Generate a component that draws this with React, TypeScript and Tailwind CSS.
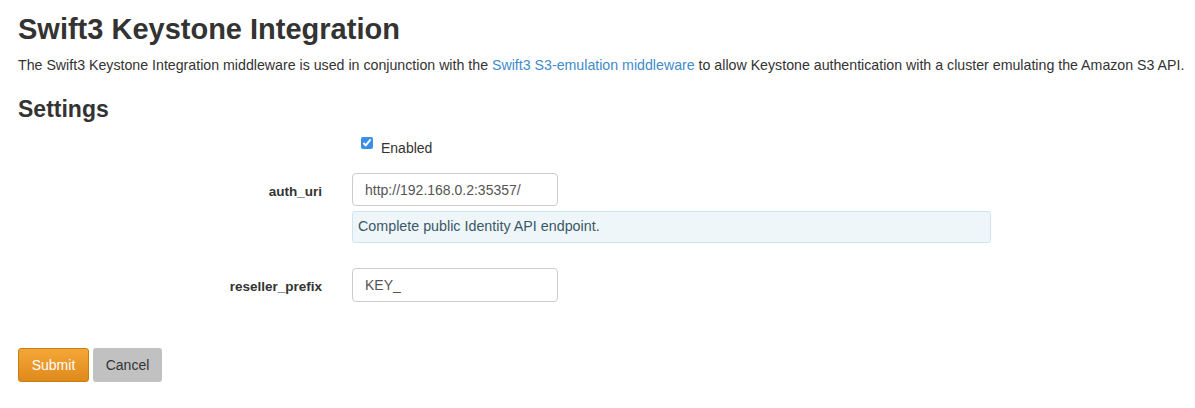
import React from "react";

function Field({ label, children }: { label: string; children: React.ReactNode }) {
    return (
        <div className="flex items-start">
            <label className="w-[304px] shrink-0 text-right font-bold pt-[9px] text-[13.5px]">{label}</label>
            <div className="ml-[30px] flex-1">{children}</div>
        </div>
    );
}

export default function App() {
    return (
        <div className="px-[18px] pt-[8px] text-[14px] text-[#333] font-['Liberation_Sans',Arial,sans-serif] bg-white min-h-screen">
            <h1 className="text-[29px] font-bold leading-[42px]">Swift3 Keystone Integration</h1>
            <p className="mt-[6px] leading-[18px] text-[14.2px] whitespace-nowrap">
                The Swift3 Keystone Integration middleware is used in conjunction with the{" "}
                <a href="#" className="text-[#428bca]">Swift3 S3-emulation middleware</a> to allow Keystone
                authentication with a cluster emulating the Amazon S3 API.
            </p>
            <h2 className="mt-[20px] text-[23px] font-bold leading-[30px]">Settings</h2>

            <form className="mt-[12px] flex flex-col">
                <div className="flex items-start ml-[343px] h-[18px]">
                    <input type="checkbox" defaultChecked className="w-[12px] h-[12px] accent-[#3b8ee8] m-0 mt-[1px]" />
                    <span className="ml-[8px] mt-[2px]">Enabled</span>
                </div>

                <div className="mt-[19px]">
                    <Field label="auth_uri">
                        <input
                            type="text"
                            defaultValue="http://192.168.0.2:35357/"
                            className="w-[206px] h-[33px] px-[12px] border border-[#ccc] rounded-[4px] text-[14px] text-[#555] outline-none"
                        />
                        <div className="mt-[5px] w-[639px] h-[32px] px-[5px] flex items-center bg-[#eef6f9] border border-[#cfe6ee] rounded-[3px] text-[#3b5866] text-[14.3px]">
                            Complete public Identity API endpoint.
                        </div>
                    </Field>
                </div>

                <div className="mt-[25px]">
                    <Field label="reseller_prefix">
                        <input
                            type="text"
                            defaultValue="KEY_"
                            className="w-[206px] h-[34px] px-[12px] border border-[#ccc] rounded-[4px] text-[14px] text-[#555] outline-none"
                        />
                    </Field>
                </div>

                <div className="mt-[46px] flex gap-[4px]">
                    <button
                        type="button"
                        className="w-[71px] h-[34px] rounded-[3px] border border-[#c7800f] bg-gradient-to-b from-[#f4a736] to-[#e0891c] text-white text-[14px]"
                    >
                        Submit
                    </button>
                    <button
                        type="button"
                        className="w-[69px] h-[34px] rounded-[3px] bg-[#c1c1c1] text-[#333] text-[14px]"
                    >
                        Cancel
                    </button>
                </div>
            </form>
        </div>
    );
}
